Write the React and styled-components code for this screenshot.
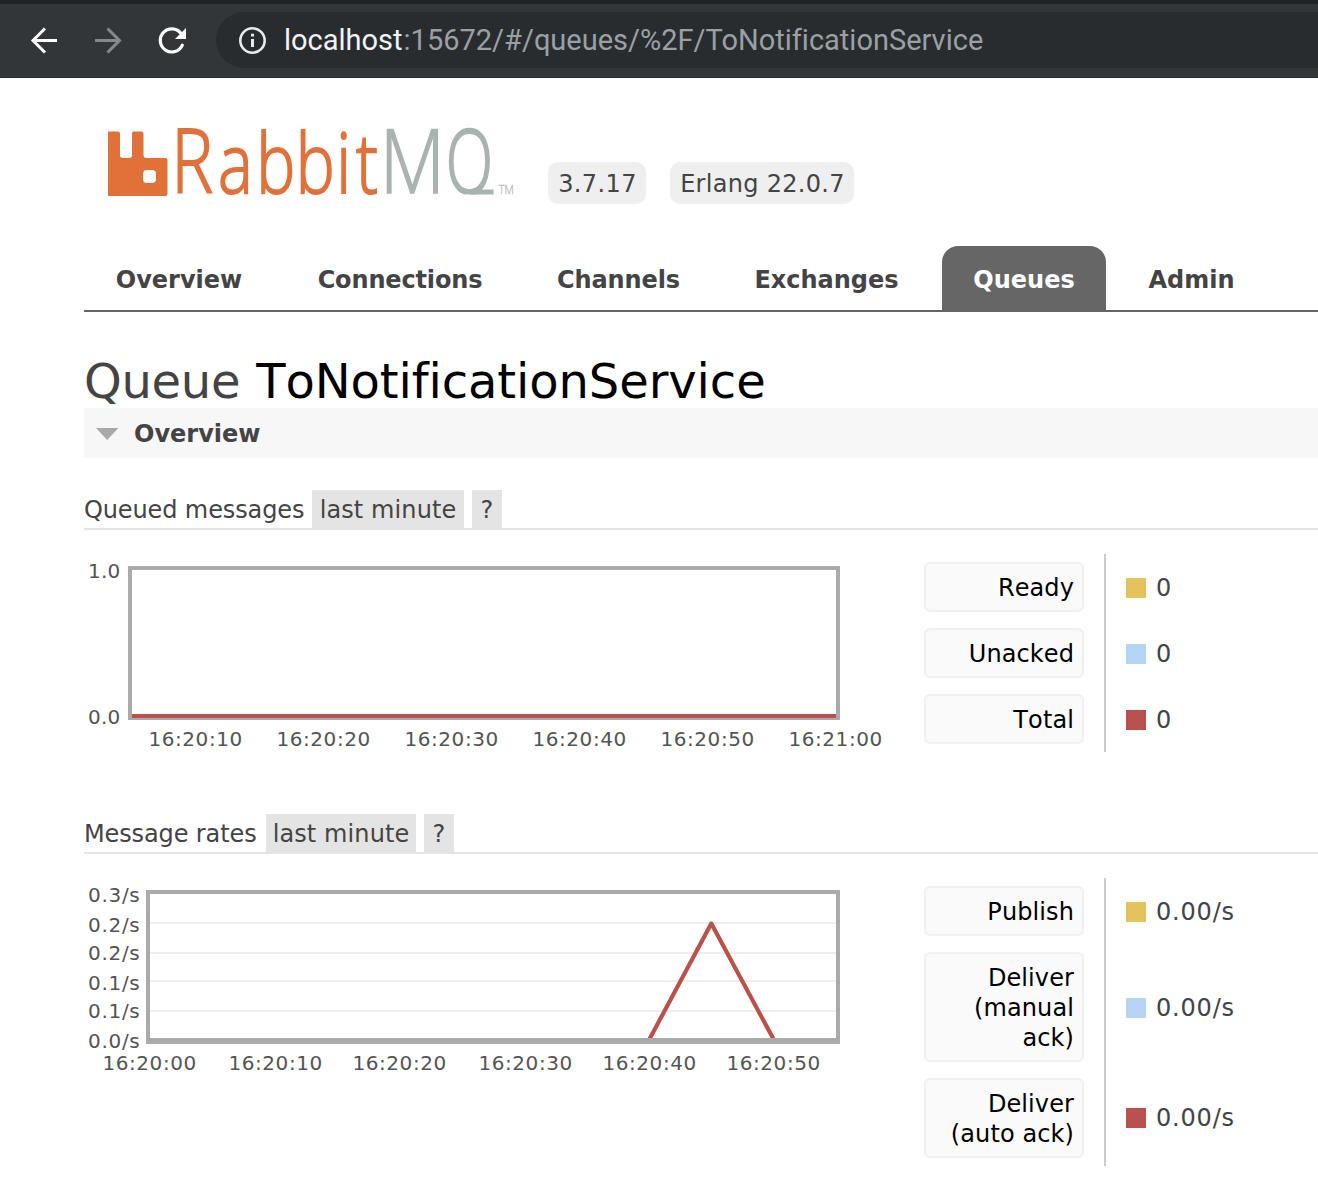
import React from "react";
import styled, { createGlobalStyle } from "styled-components";

const GlobalStyle = createGlobalStyle`
  * { box-sizing: border-box; }
  body {
    margin: 0;
    background: #fff;
    color: #444;
    font-family: "DejaVu Sans", Verdana, sans-serif;
    font-size: 24px;
    line-height: 30px;
    font-variant-ligatures: none;
    overflow: hidden;
  }
`;

const Screen = styled.div`
  width: 100%;
  height: 1192px;
  overflow: hidden;
`;

/* ---------- browser bar ---------- */

const BrowserBar = styled.header`
  display: flex;
  align-items: center;
  height: 78px;
  padding-left: 28px;
  background: #323639;
  border-top: 4px solid #202124;
  border-bottom: 1px solid #252729;
`;

const NavIcons = styled.div`
  display: flex;
  gap: 32px;
  margin-right: 28px;
`;

const AddressBar = styled.div`
  flex: 1;
  display: flex;
  align-items: center;
  height: 56px;
  margin-top: -1px;
  padding-left: 20px;
  border-radius: 28px 0 0 28px;
  background: #282c2f;
  font-family: Roboto, "Liberation Sans", sans-serif;
  font-size: 29px;
  line-height: 56px;
  color: #9aa0a6;
  white-space: nowrap;
`;

const Url = styled.span`
  margin-left: 16px;
`;

const Host = styled.span`
  color: #f1f3f4;
  margin-right: 1px;
`;

/* ---------- page ---------- */

const Page = styled.main`
  padding: 40px 0 0 84px;
`;

const Brand = styled.div`
  display: flex;
  align-items: flex-end;
  gap: 24px;
  height: 86px;
`;

const Version = styled.span`
  width: ${(p) => p.$width}px;
  height: 42px;
  padding-left: 1px;
  border-radius: 10px;
  background: #efefef;
  text-align: center;
  line-height: 45px;
  letter-spacing: ${(p) => p.$spacing}px;
  white-space: nowrap;
`;

const Tabs = styled.nav`
  display: flex;
  gap: 12px;
  margin-top: 42px;
  border-bottom: 2px solid #666;
`;

const Tab = styled.a`
  width: ${(p) => p.$width}px;
  height: 64px;
  padding-top: 3px;
  border-radius: 16px 16px 0 0;
  background: ${(p) => (p.$active ? "#666" : "transparent")};
  color: ${(p) => (p.$active ? "#fff" : "#444")};
  font-weight: bold;
  line-height: 62px;
  text-align: center;
  letter-spacing: ${(p) => p.$spacing || 0}px;
`;

const Title = styled.h1`
  margin: 0;
  padding-top: 43px;
  font-size: 48px;
  font-weight: normal;
  line-height: 53px;
  letter-spacing: -0.3px;
  white-space: nowrap;
`;

const QueueName = styled.b`
  margin-left: 1px;
  color: #000;
  font-weight: normal;
  font-kerning: none;
  letter-spacing: -0.1px;
`;

const SectionTitle = styled.h2`
  display: flex;
  align-items: center;
  gap: 15px;
  height: 50px;
  margin: 0;
  padding: 2px 0 0 12px;
  background: #f7f7f7;
  font-size: 24px;
  font-weight: bold;
`;

const Panel = styled.section`
  margin-top: ${(p) => p.$gap}px;
`;

const PanelHead = styled.h3`
  display: flex;
  gap: 8px;
  height: 40px;
  margin: 0;
  border-bottom: 2px solid #e4e4e4;
  font-size: 24px;
  font-weight: normal;
  line-height: 41px;
  white-space: nowrap;
`;

const PanelName = styled.span`
  width: ${(p) => p.$width}px;
  letter-spacing: -0.12px;
`;

const HeadButton = styled.span`
  width: ${(p) => p.$width}px;
  height: 38px;
  background: #e4e4e4;
  text-align: center;
  letter-spacing: 0.1px;
`;

const PanelBody = styled.div`
  display: flex;
  align-items: flex-start;
  gap: 16px;
  margin-top: 24px;
`;

const ChartSvg = styled.svg`
  display: block;
  flex: none;
  overflow: visible;
  font-family: "DejaVu Sans", Verdana, sans-serif;
  font-size: 20px;
  fill: #545454;
`;

const Legend = styled.div`
  flex: 1;
`;

const LegendRow = styled.div`
  display: flex;
`;

const LegendCell = styled.div`
  width: 180px;
  padding: 8px 20px 8px 0;
`;

const LegendLabel = styled.div`
  padding: 9px 8px 7px;
  border: 2px solid #f0f0f0;
  border-radius: 6px;
  background: #fafafa;
  color: #000;
  text-align: right;
  font-kerning: none;
  letter-spacing: 0.1px;
`;

const LegendValue = styled.div`
  display: flex;
  align-items: center;
  gap: 10px;
  padding: ${(p) => (p.$last ? 0 : 2)}px 0 0 20px;
  border-left: 2px solid #ccc;
  letter-spacing: 0.8px;
`;

const Swatch = styled.i`
  width: 20px;
  height: 20px;
  background: ${(p) => p.$color};
`;

/* ---------- drawings ---------- */

const BackIcon = () => (
  <svg width="32" height="32" viewBox="28 24 32 32" fill="none" stroke="#fff" strokeWidth="3">
    <path d="M57 39.500H33M45 27.500L33 39.500L45 51.500" />
  </svg>
);

const ForwardIcon = () => (
  <svg width="32" height="32" viewBox="92 24 32 32" fill="none" stroke="#868889" strokeWidth="3">
    <path d="M95 39.500H119M107.500 27.500L119.500 39.500L107.500 51.500" />
  </svg>
);

const ReloadIcon = () => (
  <svg width="32" height="32" viewBox="156 24 32 32" fill="none">
    <path d="M182.300 44.100A11.500 11.500 0 1 1 180.800 32.300" stroke="#fff" strokeWidth="3.200" strokeLinecap="round" />
    <path d="M186 27V38H175Z" fill="#fff" />
  </svg>
);

const InfoIcon = () => (
  <svg width="32" height="32" viewBox="236 24 32 32" fill="none">
    <circle cx="252.500" cy="40.500" r="12.200" stroke="#e8eaed" strokeWidth="2.600" />
    <path d="M252.500 39V47M252.500 33.700V36.600" stroke="#e8eaed" strokeWidth="3" />
  </svg>
);

const ORANGE = "#e27039";
const GREY = "#aab4ae";

const LogoSvg = styled.svg`
  display: block;
  flex: none;
  overflow: visible;
`;

const Wordmark = styled.text`
  font-family: "Open Sans", sans-serif;
  font-weight: 300;
  font-size: ${(p) => p.$size}px;
  fill: ${(p) => p.$color};
  stroke: ${(p) => p.$color};
  stroke-width: ${(p) => p.$stroke}px;
`;

const Logo = () => (
  <LogoSvg width="440" height="86" viewBox="84 118 440 86">
    <path
      fill={ORANGE}
      fillRule="evenodd"
      d="M108 131.500H118Q120 131.500 120 133.500V155Q120 158 123 158H129Q132 158 132 155V133.500Q132 131.500 134 131.500H141.500Q143.500 131.500 143.500 133.500V155Q143.500 158 146.500 158H165.500Q167.500 158 167.500 160V194Q167.500 196 165.500 196H108ZM147 170Q143 170 143 174V179Q143 183 147 183H152Q156 183 156 179V174Q156 170 152 170Z"
    />
    <g transform="scale(.79 1)">
      <Wordmark $size={89} $color={ORANGE} $stroke={1.9} y="193.500" x="216.700">R</Wordmark>
      <Wordmark $size={83} $color={ORANGE} $stroke={1.9} y="193.500" x="276 324.400 374.400 425.500 450.500">abbit</Wordmark>
    </g>
    <g transform="scale(.85 1)">
      <Wordmark $size={89} $color={GREY} $stroke={1.5} y="193.500" x="446.800">M</Wordmark>
    </g>
    <g transform="scale(.695 1)">
      <Wordmark $size={89} $color={GREY} $stroke={2.2} y="193.500" x="641.500">Q</Wordmark>
    </g>
    <rect x="465" y="194.500" width="32" height="20" fill="#fff" />
    <path d="M470 192H493.500" stroke={GREY} strokeWidth="5" />
    <Wordmark $size={13} $color="#b4bcb7" $stroke={0.3} y="193.500" x="498.500" textLength="15.500" lengthAdjust="spacingAndGlyphs">TM</Wordmark>
  </LogoSvg>
);

const Triangle = () => (
  <svg width="23" height="12" viewBox="0 0 23 12">
    <path d="M0 0H22.500L11.200 12Z" fill="#a9a9a9" />
  </svg>
);

function Chart({ top, bottom, left, height, xLabels, yLabels, grid, yBase, children }) {
  return (
    <ChartSvg width="824" height={height} viewBox={`84 ${top} 824 ${height}`}>
      {grid.map((y) => (
        <rect key={y} x={left + 4} y={y} width={832 - left} height="2" fill="#eee" />
      ))}
      <rect x={left + 2} y={top + 14} width={836 - left} height={bottom - top - 16} fill="none" stroke="#aaa" strokeWidth="4" />
      {children}
      {yLabels.map(([text, y]) => (
        <text key={y} x="88" y={y} letterSpacing={text.includes("/") ? 0.7 : 0.2}>{text}</text>
      ))}
      {xLabels.map(([text, x]) => (
        <text key={x} x={x + 0.5} y={yBase} letterSpacing=".55">{text}</text>
      ))}
    </ChartSvg>
  );
}

/* ---------- data ---------- */

const COLORS = ["#e6c25b", "#b6d5f4", "#bb514f"];

const TABS = [
  ["Overview", 190],
  ["Connections", 228, -0.15],
  ["Channels", 185, -0.1],
  ["Exchanges", 207],
  ["Queues", 164],
  ["Admin", 147],
];

const LegendTable = ({ rows }) => (
  <Legend>
    {rows.map(([label, value], i) => (
      <LegendRow key={label}>
        <LegendCell>
          <LegendLabel>{label}</LegendLabel>
        </LegendCell>
        <LegendValue $last={label.includes("auto")}>
          <Swatch $color={COLORS[i]} />
          {value}
        </LegendValue>
      </LegendRow>
    ))}
  </Legend>
);

export default function App() {
  return (
    <Screen>
      <GlobalStyle />
      <BrowserBar>
        <NavIcons>
          <BackIcon />
          <ForwardIcon />
          <ReloadIcon />
        </NavIcons>
        <AddressBar>
          <InfoIcon />
          <Url>
            <Host>localhost</Host>:15672/#/queues/%2F/ToNotificationService
          </Url>
        </AddressBar>
      </BrowserBar>

      <Page>
        <Brand>
          <Logo />
          <Version $width={98} $spacing={0.4}>3.7.17</Version>
          <Version $width={184} $spacing={0.3}>Erlang 22.0.7</Version>
        </Brand>

        <Tabs>
          {TABS.map(([name, width, spacing]) => (
            <Tab key={name} $width={width} $spacing={spacing} $active={name === "Queues"}>{name}</Tab>
          ))}
        </Tabs>

        <Title>
          Queue <QueueName>ToNotificationService</QueueName>
        </Title>

        <SectionTitle>
          <Triangle />
          Overview
        </SectionTitle>

        <Panel $gap={32}>
          <PanelHead>
            <PanelName $width={220}>Queued messages</PanelName>
            <HeadButton $width={152}>last minute</HeadButton>
            <HeadButton $width={30}>?</HeadButton>
          </PanelHead>
          <PanelBody>
            <Chart
              top={554}
              bottom={720}
              left={128}
              height={198}
              grid={[]}
              yLabels={[["1.0", 578], ["0.0", 724]]}
              yBase={746}
              xLabels={[["16:20:10", 148], ["16:20:20", 276], ["16:20:30", 404], ["16:20:40", 532], ["16:20:50", 660], ["16:21:00", 788]]}
            >
              <rect x="132" y="714" width="704" height="4" fill={COLORS[2]} />
            </Chart>
            <LegendTable rows={[["Ready", "0"], ["Unacked", "0"], ["Total", "0"]]} />
          </PanelBody>
        </Panel>

        <Panel $gap={62}>
          <PanelHead>
            <PanelName $width={174}>Message rates</PanelName>
            <HeadButton $width={150}>last minute</HeadButton>
            <HeadButton $width={30}>?</HeadButton>
          </PanelHead>
          <PanelBody>
            <Chart
              top={878}
              bottom={1044}
              left={146}
              height={210}
              grid={[922, 952, 980, 1010]}
              yLabels={[["0.3/s", 902], ["0.2/s", 932], ["0.2/s", 960], ["0.1/s", 990], ["0.1/s", 1018], ["0.0/s", 1048]]}
              yBase={1070}
              xLabels={[["16:20:00", 102], ["16:20:10", 228], ["16:20:20", 352], ["16:20:30", 478], ["16:20:40", 602], ["16:20:50", 726]]}
            >
              <path d="M649 1040L711.300 923.500L774 1040" fill="none" stroke={COLORS[0]} strokeWidth="4" strokeLinejoin="round" />
              <path d="M649 1040L711.300 923.500L774 1040" fill="none" stroke={COLORS[2]} strokeWidth="4" strokeLinejoin="round" />
              <rect x="150" y="1038" width="690" height="6" fill="#aaa" />
            </Chart>
            <LegendTable
              rows={[["Publish", "0.00/s"], ["Deliver (manual ack)", "0.00/s"], ["Deliver (auto ack)", "0.00/s"]]}
            />
          </PanelBody>
        </Panel>
      </Page>
    </Screen>
  );
}
